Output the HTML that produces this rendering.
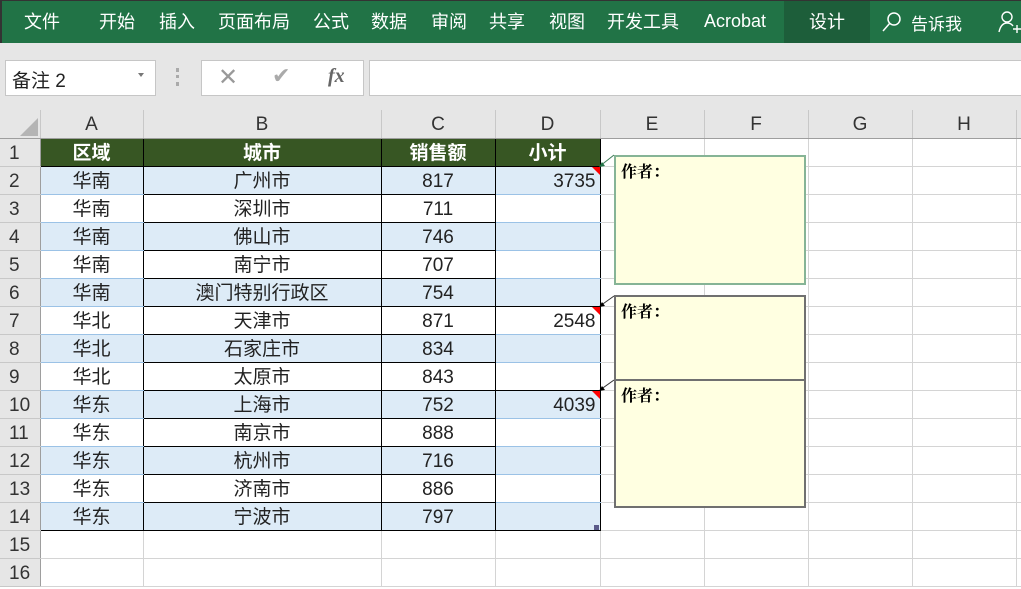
<!DOCTYPE html>
<html><head><meta charset="utf-8"><style>
*{margin:0;padding:0;box-sizing:border-box}
body{width:1021px;height:589px;overflow:hidden;background:#fff;font-family:"Liberation Sans","Noto Sans CJK SC",sans-serif;position:relative}
.rib{position:absolute;left:0;top:0;width:1021px;height:43px;background:#217346;color:#fff;font-size:18px;border-left:2px solid #333;border-top:1px solid #333}
.rib span{position:absolute;top:7px}
.gray{position:absolute;left:0;top:43px;width:1021px;height:68px;background:#e6e6e6}
.box{position:absolute;background:#fff;border:1px solid #c6c6c6}
table{position:absolute;left:0;top:110px;border-collapse:collapse;table-layout:fixed;width:1026px}
td{height:28px;border-right:1px solid #d4d4d4;border-bottom:1px solid #d4d4d4;font-size:19px;text-align:center;padding:2px 0 0 0;line-height:25px;color:#222;white-space:nowrap;overflow:hidden}
tr.h td{background:#e6e6e6;color:#333;border-color:#c8c8c8;border-bottom:1px solid #9e9e9e}
td.r{background:#e6e6e6;color:#333;border-right:1px solid #9e9e9e;border-bottom:1px solid #c8c8c8;text-align:left;padding-left:9px}
tr.t td.x{background:#375623;color:#fff;font-weight:bold;border-right:1px solid #000;border-bottom:1px solid #000}
td.a{border-right:1px solid #000;border-bottom:1px solid #9bc2e6}
td.b{border-right:1px solid #000;border-bottom:1px solid #000}
td.d{border-right:1px solid #000;border-bottom:1px solid #9bc2e6;text-align:right;padding-right:4px}
td.dk{border-bottom:1px solid #000}
tr.e td.a,tr.e td.b,tr.e td.d{background:#ddebf7}
.cm{position:absolute;left:614px;width:192px;background:#ffffe1;font-family:"Liberation Serif","Noto Serif CJK SC",serif;font-weight:bold;font-size:16px;padding:2px 0 0 5px;color:#000}
.tri{position:absolute;width:0;height:0;border-top:8px solid #f00;border-left:8px solid transparent}
</style></head><body>
<div class="rib">
<span style="left:22px">文件</span><span style="left:97px">开始</span><span style="left:157px">插入</span><span style="left:216px">页面布局</span><span style="left:311px">公式</span><span style="left:369px">数据</span><span style="left:429px">审阅</span><span style="left:487px">共享</span><span style="left:547px">视图</span><span style="left:605px">开发工具</span><span style="left:702px;top:10px">Acrobat</span>
<div style="position:absolute;left:782px;top:0;width:86px;height:43px;background:#1d5e3a"></div>
<span style="left:807px">设计</span>
<svg style="position:absolute;left:879px;top:10px" width="22" height="22"><circle cx="13" cy="8" r="6" fill="none" stroke="#fff" stroke-width="1.5"/><line x1="9" y1="12" x2="2" y2="20" stroke="#fff" stroke-width="1.5"/></svg>
<span style="left:909px;font-size:17px;top:9px">告诉我</span>
<svg style="position:absolute;left:996px;top:9px" width="25" height="26"><circle cx="9" cy="7" r="5" fill="none" stroke="#fff" stroke-width="1.4"/><path d="M1 22 Q3 13 9 13 Q13 13 15 16" fill="none" stroke="#fff" stroke-width="1.4"/><path d="M15 19h8M19 15v8" stroke="#fff" stroke-width="1.4"/></svg>
</div>
<div class="gray"></div>
<div class="box" style="left:5px;top:60px;width:151px;height:36px;font-size:19px;padding:5px 0 0 6px;color:#222">备注 2<span style="position:absolute;left:132px;top:12px;border-top:4px solid #777;border-left:3px solid transparent;border-right:3px solid transparent"></span></div>
<div style="position:absolute;left:176px;top:68px;width:3px;height:18px;border-left:3px dotted #aaa"></div>
<div class="box" style="left:201px;top:60px;width:163px;height:36px;color:#999">
<span style="position:absolute;left:16px;top:2px;font-size:24px">✕</span><span style="position:absolute;left:70px;top:2px;font-size:22px;color:#aaa">✔</span><span style="position:absolute;left:126px;top:4px;font-family:'Liberation Serif',serif;font-style:italic;font-weight:bold;font-size:20px;color:#666">fx</span></div>
<div class="box" style="left:369px;top:60px;width:660px;height:36px"></div>
<table>
<colgroup><col style="width:40px"><col style="width:103px"><col style="width:238px"><col style="width:114px"><col style="width:105px"><col style="width:104px"><col style="width:104px"><col style="width:104px"><col style="width:104px"><col style="width:10px"></colgroup>
<tr class="h"><td style="background:#e6e6e6;position:relative"><div style="position:absolute;right:2px;bottom:2px;border-bottom:18px solid #b4b4b4;border-left:18px solid transparent"></div></td><td>A</td><td>B</td><td>C</td><td>D</td><td>E</td><td>F</td><td>G</td><td>H</td><td></td></tr>
<tr class="t"><td class="r">1</td><td class="x">区域</td><td class="x">城市</td><td class="x">销售额</td><td class="x">小计</td><td></td><td></td><td></td><td></td><td></td></tr>
<tr class="e"><td class="r">2</td><td class="a">华南</td><td class="b">广州市</td><td class="b">817</td><td class="d">3735</td><td></td><td></td><td></td><td></td><td></td></tr>
<tr><td class="r">3</td><td class="a">华南</td><td class="b">深圳市</td><td class="b">711</td><td class="d"></td><td></td><td></td><td></td><td></td><td></td></tr>
<tr class="e"><td class="r">4</td><td class="a">华南</td><td class="b">佛山市</td><td class="b">746</td><td class="d"></td><td></td><td></td><td></td><td></td><td></td></tr>
<tr><td class="r">5</td><td class="a">华南</td><td class="b">南宁市</td><td class="b">707</td><td class="d"></td><td></td><td></td><td></td><td></td><td></td></tr>
<tr class="e"><td class="r">6</td><td class="a">华南</td><td class="b">澳门特别行政区</td><td class="b">754</td><td class="d dk"></td><td></td><td></td><td></td><td></td><td></td></tr>
<tr><td class="r">7</td><td class="a">华北</td><td class="b">天津市</td><td class="b">871</td><td class="d">2548</td><td></td><td></td><td></td><td></td><td></td></tr>
<tr class="e"><td class="r">8</td><td class="a">华北</td><td class="b">石家庄市</td><td class="b">834</td><td class="d"></td><td></td><td></td><td></td><td></td><td></td></tr>
<tr><td class="r">9</td><td class="a">华北</td><td class="b">太原市</td><td class="b">843</td><td class="d dk"></td><td></td><td></td><td></td><td></td><td></td></tr>
<tr class="e"><td class="r">10</td><td class="a">华东</td><td class="b">上海市</td><td class="b">752</td><td class="d">4039</td><td></td><td></td><td></td><td></td><td></td></tr>
<tr><td class="r">11</td><td class="a">华东</td><td class="b">南京市</td><td class="b">888</td><td class="d"></td><td></td><td></td><td></td><td></td><td></td></tr>
<tr class="e"><td class="r">12</td><td class="a">华东</td><td class="b">杭州市</td><td class="b">716</td><td class="d"></td><td></td><td></td><td></td><td></td><td></td></tr>
<tr><td class="r">13</td><td class="a">华东</td><td class="b">济南市</td><td class="b">886</td><td class="d"></td><td></td><td></td><td></td><td></td><td></td></tr>
<tr class="e"><td class="r">14</td><td class="a dk">华东</td><td class="b">宁波市</td><td class="b">797</td><td class="d dk"></td><td></td><td></td><td></td><td></td><td></td></tr>
<tr><td class="r">15</td><td></td><td></td><td></td><td></td><td></td><td></td><td></td><td></td><td></td></tr>
<tr><td class="r">16</td><td></td><td></td><td></td><td></td><td></td><td></td><td></td><td></td><td></td></tr>
</table>
<div class="tri" style="left:592px;top:167px"></div>
<div class="tri" style="left:592px;top:307px"></div>
<div class="tri" style="left:592px;top:391px"></div>
<div style="position:absolute;left:594px;top:525px;width:5px;height:5px;background:#5b5b8a"></div>
<svg style="position:absolute;left:596px;top:150px" width="22" height="250">
<line x1="4" y1="16" x2="18" y2="5" stroke="#3b7a55" stroke-width="1"/><path d="M3 17 l6 -1 l-3 -4z" fill="#217346"/>
<line x1="4" y1="156" x2="18" y2="146" stroke="#333" stroke-width="1"/><path d="M3 157 l6 -1 l-3 -4z" fill="#000"/>
<line x1="4" y1="240" x2="18" y2="230" stroke="#333" stroke-width="1"/><path d="M3 241 l6 -1 l-3 -4z" fill="#000"/>
</svg>
<div class="cm" style="top:155px;height:130px;border:2px solid #86b496">作者：</div>
<div class="cm" style="top:295px;height:86px;border:2px solid #707070">作者：</div>
<div class="cm" style="top:379px;height:129px;border:2px solid #707070">作者：</div>
</body></html>
